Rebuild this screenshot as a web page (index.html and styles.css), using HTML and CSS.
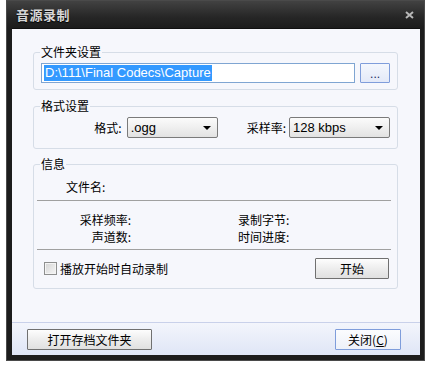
FILE: index.html
```html
<!doctype html>
<html>
<head>
    <meta charset="utf-8">
    <title>音源录制</title>
    <link rel="stylesheet" href="styles.css">
</head>
<body>

<div class="window">

    <div class="titlebar">
        <span class="title">音源录制</span>
        <svg class="close" width="9" height="8" viewBox="0 0 9 8">
            <path d="M1 1 L8 7 M8 1 L1 7" stroke="#b8b8b8" stroke-width="2" fill="none"/>
        </svg>
    </div>

    <div class="client">
        <div class="main">

            <fieldset class="group group-folder">
                <legend>文件夹设置</legend>
                <div class="row">
                    <div class="path"><span class="sel">D:\111\Final Codecs\Capture</span></div>
                    <button class="btn btn-browse">...</button>
                </div>
            </fieldset>

            <fieldset class="group group-format">
                <legend>格式设置</legend>
                <div class="row row-format">
                    <label class="lbl">格式:</label>
                    <div class="combo combo-fmt"><span>.ogg</span><i class="arrow"></i></div>
                    <label class="lbl lbl-rate">采样率:</label>
                    <div class="combo combo-rate"><span>128 kbps</span><i class="arrow"></i></div>
                </div>
            </fieldset>

            <fieldset class="group group-info">
                <legend>信息</legend>
                <div class="info-name">文件名:</div>
                <div class="sep"></div>
                <div class="info-cols">
                    <div class="col-left">
                        <div>采样频率:</div>
                        <div>声道数:</div>
                    </div>
                    <div class="col-right">
                        <div>录制字节:</div>
                        <div>时间进度:</div>
                    </div>
                </div>
                <div class="sep sep-2"></div>
                <div class="row row-start">
                    <label class="check"><span class="box"></span>播放开始时自动录制</label>
                    <button class="btn btn-start">开始</button>
                </div>
            </fieldset>

        </div>

        <div class="footer">
            <button class="btn btn-open">打开存档文件夹</button>
            <button class="btn btn-close">关闭(<u>C</u>)</button>
        </div>
    </div>

</div>

</body>
</html>
```

FILE: styles.css
```css
* {
    box-sizing: border-box;
}

body {
    margin: 0;
    background: #fff;
    font-family: "Noto Sans CJK SC", "Liberation Sans", sans-serif;
    font-size: 12px;
    color: #000;
}

.window {
    width: 419px;
    height: 361px;
    margin-left: 6px;
    padding: 0 4px 5px 5px;
    background: #1c1c1c;
    border: 1px solid #4a4a4a;
    display: flex;
    flex-direction: column;
}

.titlebar {
    height: 27px;
    margin: 0 -4px 0 -5px;
    padding: 0 10px 0 9px;
    background: linear-gradient(#424242, #262626 60%, #1c1c1c);
    display: flex;
    align-items: center;
    justify-content: space-between;
}

.title {
    color: #d6d6d6;
    font-size: 13px;
    font-weight: bold;
    letter-spacing: 0.5px;
    text-shadow: 0 1px 1px #000;
}

.close {
    display: block;
}

.client {
    flex: 1;
    background: #f6f7fc;
    display: flex;
    flex-direction: column;
    border-top: 1px solid #101010;
}

.main {
    flex: 1;
    padding: 16px 22px 0 21px;
}

/* group boxes */

.group {
    margin: 0;
    padding: 0;
    min-width: 0;
    border: 1px solid #d6dde7;
    border-radius: 3px;
}

.group legend {
    margin-left: 6px;
    padding: 0 1px;
    line-height: 14px;
}

.row {
    display: flex;
    align-items: center;
}

.group-folder .row {
    margin-top: 4px;
    padding: 0 7px 6px 7px;
}

.path {
    width: 316px;
    height: 20px;
    border: 1px solid #7fa5d2;
    background: #fff;
    padding: 1px 0 0 2px;
    font-family: "Liberation Sans", sans-serif;
    font-size: 13px;
    line-height: 16px;
}

.sel {
    background: #3399ff;
    color: #fff;
    display: inline-block;
    padding: 0 1px;
}

.btn {
    font-family: "Noto Sans CJK SC", "Liberation Sans", sans-serif;
    font-size: 12px;
    height: 21px;
    padding: 0;
    line-height: 18px;
    border: 1px solid #707070;
    border-radius: 1px;
    background: linear-gradient(#fdfdfd, #ededed 50%, #e0e0e0);
    color: #000;
}

.btn-browse {
    width: 30px;
    height: 20px;
    margin: -1px 0 0 5px;
    padding-top: 2px;
    border-color: #7f9ddb;
    background: linear-gradient(#f4f7fd, #e3e9f8);
    font-family: "Liberation Sans", sans-serif;
    color: #1a2a5a;
    line-height: 12px;
}

.group-format {
    margin-top: 9px;
}

.row-format {
    margin-top: 4px;
    padding: 0 7px 10px 0;
    justify-content: flex-end;
}

.lbl {
    margin-right: 5px;
}

.lbl-rate {
    margin-left: 29px;
    margin-right: 3px;
}

.combo {
    height: 21px;
    border: 1px solid #7a7a7a;
    border-radius: 2px;
    background: linear-gradient(#fbfbfb, #efefef 50%, #e2e2e2);
    display: flex;
    align-items: center;
    justify-content: space-between;
    padding: 0 6px 0 3px;
    font-family: "Liberation Sans", sans-serif;
    font-size: 13px;
}

.combo-fmt {
    width: 91px;
}

.combo-rate {
    width: 101px;
}

.arrow {
    width: 0;
    height: 0;
    border-left: 4px solid transparent;
    border-right: 4px solid transparent;
    border-top: 4px solid #000;
}

.group-info {
    margin-top: 8px;
}

.info-name {
    margin-top: 8px;
    padding-left: 32px;
    line-height: 16px;
}

.sep {
    margin: 5px 6px 0 3px;
    height: 1px;
    background: #a0a0a0;
}

.sep-2 {
    margin-top: 4px;
}

.info-cols {
    display: flex;
    margin-top: 10px;
    line-height: 17px;
}

.col-left {
    width: 97px;
    text-align: right;
}

.col-right {
    margin-left: 107px;
}

.row-start {
    margin-top: 8px;
    padding: 0 8px 9px 10px;
    justify-content: space-between;
}

.check {
    display: flex;
    align-items: center;
}

.box {
    width: 13px;
    height: 13px;
    margin-right: 3px;
    border: 1px solid #8e8f8f;
    background: linear-gradient(135deg, #d4d4d4, #f6f6f6);
    box-shadow: inset 0 0 0 1px #f4f4f4;
}

.btn-start {
    width: 74px;
}

/* bottom bar */

.footer {
    height: 33px;
    border-top: 1px solid #c9d1ea;
    background: linear-gradient(#f3f5fc, #dfe5f6);
    display: flex;
    justify-content: space-between;
    align-items: flex-start;
    padding: 6px 19px 0 15px;
}

.btn-open {
    width: 125px;
}

.btn-close {
    width: 66px;
    border-color: #7f9ddb;
    background: linear-gradient(#fbfcfe, #eef1f9);
}
```
